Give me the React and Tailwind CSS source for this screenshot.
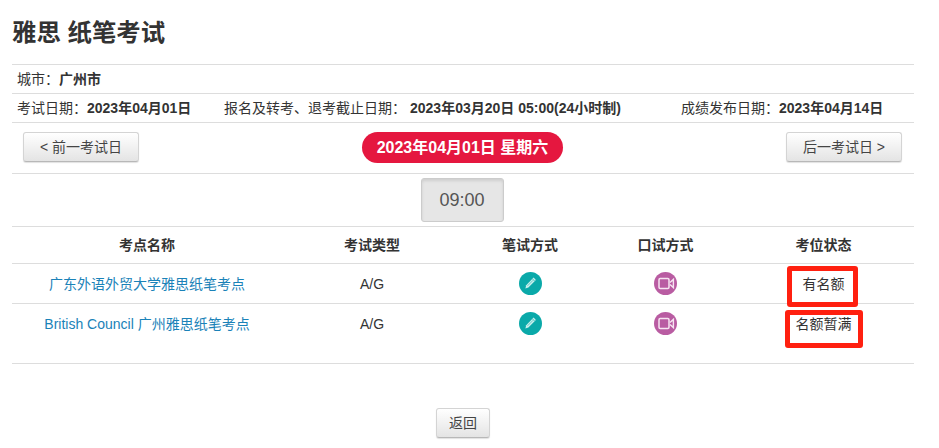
const FONT = "font-['Liberation_Sans','Noto_Sans_CJK_SC',sans-serif]";
const COLON = "\uFF1A";

function Pencil() {
  return (
    <svg width="23" height="23" viewBox="0 0 23 23" className="block">
      <circle cx="11.5" cy="11.5" r="11.5" fill="#0aa9a9" />
      <path d="M14.6 5.6 L16.9 7.9 L9.4 15.6 L6.4 16.6 L7.2 13.2 Z" fill="#c9eeec" />
      <path d="M13.5 6.9 L15.7 9.1" stroke="#0aa9a9" strokeWidth="0.7" />
      <path d="M8.6 13.8 L14 8.3" stroke="#0aa9a9" strokeWidth="0.5" />
    </svg>
  );
}

function Video() {
  return (
    <svg width="23" height="23" viewBox="0 0 23 23" className="block">
      <circle cx="11.5" cy="11.5" r="11.5" fill="#b95ca2" />
      <rect x="5" y="6.5" width="10" height="10" rx="1.2" fill="#b95ca2" stroke="#f6e4f1" strokeWidth="1.5" />
      <path d="M16 10.6 L19.4 7.4 V15.6 L16 12.4" fill="none" stroke="#f6e4f1" strokeWidth="1.4" />
    </svg>
  );
}

function Btn({ children, className = "" }) {
  return (
    <div className={`flex items-center justify-center h-[30px] rounded-[3px] border border-[#d4d4d4] border-b-[#b8b8b8] bg-gradient-to-b from-white to-[#e4e4e4] shadow-[0_1px_1px_rgba(0,0,0,0.12)] text-[14px] text-[#444] ${className}`}>
      {children}
    </div>
  );
}

const cols = "grid grid-cols-[270px_180px_136px_135px_181px]";

function Row({ name, status, note, h }) {
  return (
    <div className={`${cols} border-b border-[#ddd] ${h} text-[14px] text-[#333]`}>
      <div className="pt-[10px] text-center text-[#1a82b8] leading-[20px]">{name}</div>
      <div className="pt-[10px] text-center leading-[20px]">A/G</div>
      <div className="pt-2 flex justify-center"><Pencil /></div>
      <div className="pt-2 flex justify-center"><Video /></div>
      <div className="pt-[10px] text-center leading-[20px] relative">
        {status}
        <div className={note} />
      </div>
    </div>
  );
}

export default function App() {
  return (
    <div className={`${FONT} w-[939px] h-[448px] overflow-hidden bg-white px-3 text-[#333]`}>
      <div className="w-[902px]">
        <h1 className="h-[64px] pt-[18px] text-[24.4px] leading-[30px] font-bold text-[#333]">雅思 纸笔考试</h1>
        <div className="h-[29px] border-t border-[#ddd] pl-[5px] text-[14px] leading-[28px]">
          城市{COLON}<b>广州市</b>
        </div>
        <div className="h-[29px] border-t border-[#ddd] pl-[5px] pr-[12px] text-[14px] leading-[28px] flex">
          <div className="w-[207px]">考试日期{COLON}<b>2023年04月01日</b></div>
          <div className="w-[457px]">报名及转考、退考截止日期{COLON}<b className="ml-[4px]">2023年03月20日 05:00(24小时制)</b></div>
          <div>成绩发布日期{COLON}<b>2023年04月14日</b></div>
        </div>
        <div className="h-[51px] border-t border-[#ddd] pt-[9px] pl-[11px] pr-[12px] flex justify-between items-start">
          <Btn className="w-[116px]">&lt; 前一考试日</Btn>
          <div className="h-[31px] w-[201px] rounded-full bg-[#e5173f] text-white font-bold text-[16px] flex items-center justify-center">
            2023年04月01日 星期六
          </div>
          <Btn className="w-[116px]">后一考试日 &gt;</Btn>
        </div>
        <div className="h-[53px] border-t border-[#ddd] pt-[4px] pr-[2px] flex justify-center">
          <div className="w-[83px] h-[44px] rounded-[3px] border border-[#ccc] bg-[#e6e6e6] shadow-[inset_0_2px_3px_rgba(0,0,0,0.1)] flex items-center justify-center text-[18px] text-[#555]">
            09:00
          </div>
        </div>
        <div className={`${cols} h-[38px] border-t border-b border-[#ddd] text-[14px] font-bold leading-[36px] text-center text-[#333]`}>
          <div>考点名称</div>
          <div>考试类型</div>
          <div>笔试方式</div>
          <div>口试方式</div>
          <div>考位状态</div>
        </div>
        <Row
          name="广东外语外贸大学雅思纸笔考点"
          status="有名额"
          h="h-[40px]"
          note="absolute left-[54px] top-[2px] w-[71px] h-[41px] border-[5px] border-[#ff2010] rounded-[3px]"
        />
        <Row
          name="British Council 广州雅思纸笔考点"
          status="名额暂满"
          h="h-[60px]"
          note="absolute left-[52px] top-[6px] w-[78px] h-[38px] border-[5px] border-[#ff2010] rounded-[3px]"
        />
        <div className="pt-[44px] flex justify-center">
          <Btn className="w-[54px]">返回</Btn>
        </div>
      </div>
    </div>
  );
}
